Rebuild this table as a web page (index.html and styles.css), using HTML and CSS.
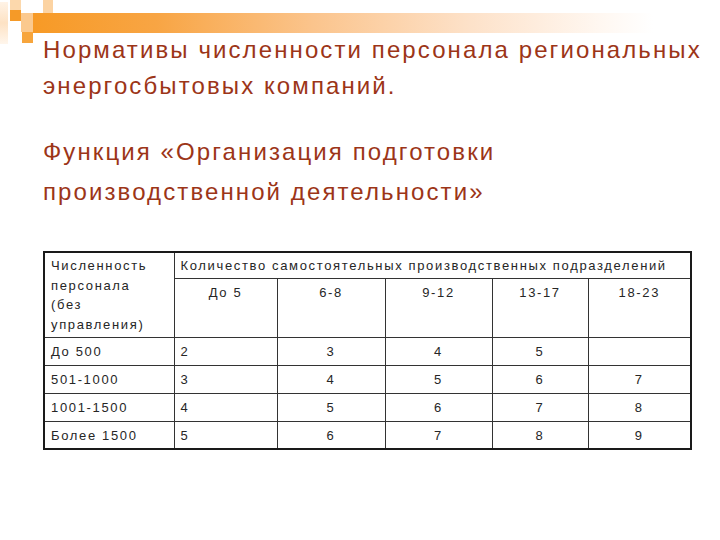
FILE: index.html
```html
<!DOCTYPE html>
<html lang="ru">
<head>
<meta charset="utf-8">
<title>Нормативы численности персонала</title>
<link rel="stylesheet" href="styles.css">
</head>
<body>
<div class="slide">
  <div class="deco">
    <span class="sq sq-pale-left"></span>
    <span class="sq sq-top"></span>
    <span class="sq sq-top2"></span>
    <span class="sq sq-main"></span>
    <span class="sq sq-mid"></span>
    <span class="sq sq-low"></span>
    <span class="bar"></span>
  </div>
  <h1 class="title">Нормативы численности персонала региональных энергосбытовых компаний.</h1>
  <h2 class="subtitle">Функция «Организация подготовки<br>производственной деятельности»</h2>
  <table class="norms">
    <colgroup>
      <col class="c0"><col class="c1"><col class="c2"><col class="c3"><col class="c4"><col class="c5">
    </colgroup>
    <tr class="h1row">
      <td rowspan="2" class="lead head-lead">Численность персонала (без управления)</td>
      <td colspan="5" class="lead">Количество самостоятельных производственных подразделений</td>
    </tr>
    <tr class="h2row">
      <td class="hc">До 5</td><td class="hc">6-8</td><td class="hc">9-12</td><td class="hc">13-17</td><td class="hc">18-23</td>
    </tr>
    <tr><td class="lead">До 500</td><td class="lead">2</td><td>3</td><td>4</td><td>5</td><td></td></tr>
    <tr><td class="lead">501-1000</td><td class="lead">3</td><td>4</td><td>5</td><td>6</td><td>7</td></tr>
    <tr><td class="lead">1001-1500</td><td class="lead">4</td><td>5</td><td>6</td><td>7</td><td>8</td></tr>
    <tr class="last"><td class="lead">Более 1500</td><td class="lead">5</td><td>6</td><td>7</td><td>8</td><td>9</td></tr>
  </table>
</div>
</body>
</html>
```
FILE: styles.css
```css
html, body {
  margin: 0;
  padding: 0;
  background: #ffffff;
}
.slide {
  width: 720px;
  height: 540px;
  overflow: hidden;
  font-family: "Liberation Sans", Arial, sans-serif;
}
.deco {
  position: relative;
  height: 32px;
}
.sq { position: absolute; display: block; }
.sq-pale-left {
  left: 0; top: 2px; width: 8px; height: 42px;
  background: linear-gradient(to bottom, #fff3e6, #fde2c4 50%, #fff6ec);
}
.sq-top { left: 10px; top: 0; width: 11px; height: 10px; background: #fcd8ac; }
.sq-top2 { left: 43px; top: 0; width: 10px; height: 13px; background: #fcd3a2; }
.sq-main { left: 10px; top: 10px; width: 11px; height: 11px; background: #f59a28; }
.sq-mid { left: 21px; top: 13px; width: 12px; height: 19px; background: #fbc98e; }
.sq-low { left: 22px; top: 32px; width: 11px; height: 11px; background: #f7a53c; }
.bar {
  position: absolute;
  left: 33px; top: 13px; width: 620px; height: 20px;
  background: linear-gradient(to right, #f79a26 0%, #f8a544 20%, #fbc48c 45%, #fde1c8 70%, #fff8f2 92%, #ffffff 100%);
}
.title {
  margin: 0;
  padding-left: 43px;
  width: 677px;
  font-size: 24px;
  font-weight: normal;
  line-height: 36px;
  color: #9c3518;
  letter-spacing: 2.1px;
}
.subtitle {
  margin: 28px 0 0 0;
  padding-left: 43px;
  font-size: 24px;
  font-weight: normal;
  line-height: 40px;
  color: #9c3518;
  letter-spacing: 2.1px;
}
.norms {
  margin: 39px 0 0 43px;
  width: 648px;
  border-collapse: collapse;
  border: 2px solid #1a1a1a;
  table-layout: fixed;
  font-size: 13px;
  letter-spacing: 1.65px;
  color: #262626;
}
.c0 { width: 130px; }
.c1 { width: 103px; }
.c2 { width: 108px; }
.c3 { width: 107px; }
.c4 { width: 96px; }
.c5 { width: 103px; }
.norms td {
  border: 1px solid #333;
  height: 27px;
  padding: 0 4px;
  text-align: center;
  vertical-align: middle;
}
.norms td.lead { text-align: left; padding-left: 6px; }
.norms .h1row td { height: 25px; }
.norms td.head-lead {
  vertical-align: top;
  padding-top: 3px;
  padding-right: 12px;
  line-height: 19.7px;
}
.norms .h2row td { height: 52px; vertical-align: top; padding-top: 6px; }
.norms .last td { height: 26px; }
```
